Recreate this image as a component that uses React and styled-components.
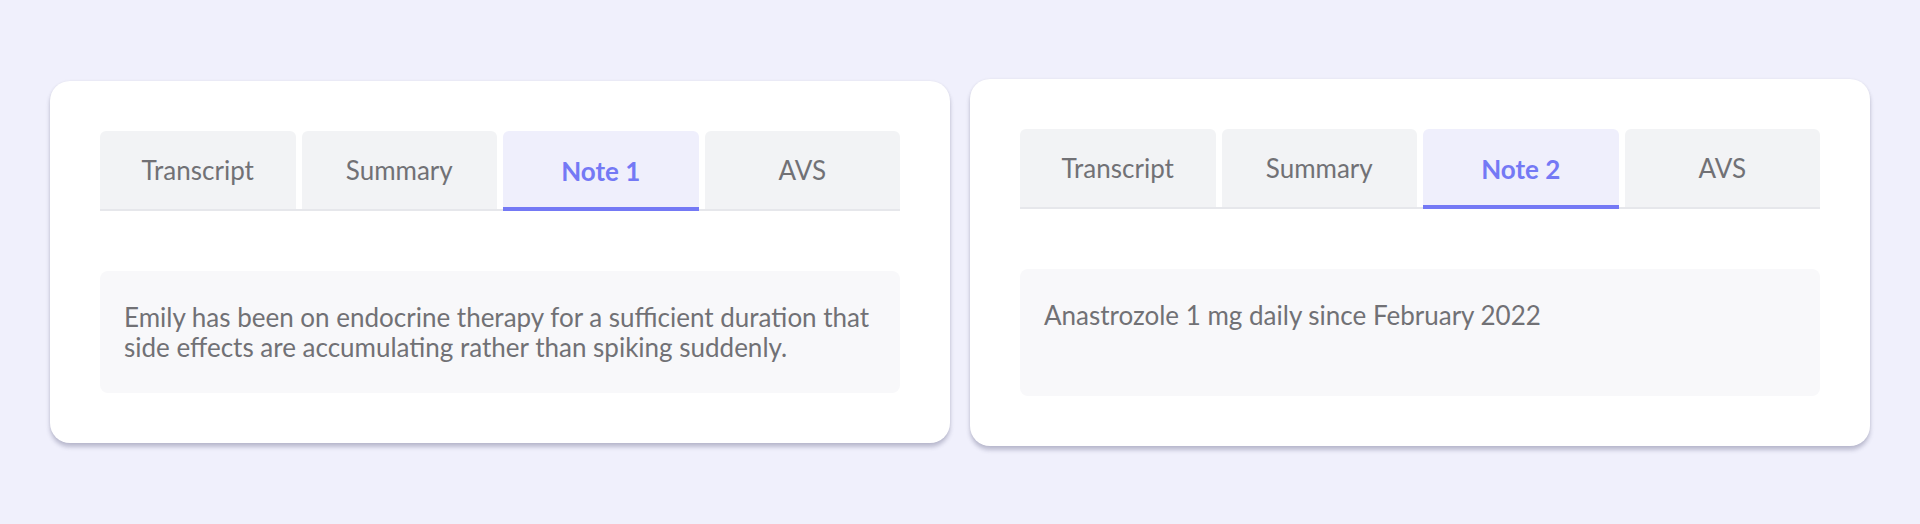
import styled, { createGlobalStyle } from "styled-components";

const GlobalStyle = createGlobalStyle`
  html, body {
    margin: 0;
    padding: 0;
    background-color: #f0f0fc;
  }
  body {
    font-family: Lato, "Noto Sans", sans-serif;
  }
`;

const Page = styled.div`
  min-height: 524px;
  box-sizing: border-box;
  padding: 0 50px;
  display: flex;
  align-items: center;
  gap: 20px;
`;

const Card = styled.div`
  flex: 1;
  background-color: #ffffff;
  border-radius: 20px;
  padding: 50px;
  box-shadow: 0 4px 4px rgba(70, 70, 110, 0.3), 0 0 3px rgba(0, 0, 0, 0.06);
`;

const TabList = styled.div`
  display: flex;
  gap: 6px;
  border-bottom: 2px solid #e6e7eb;
`;

const Tab = styled.button`
  flex: 1;
  border: none;
  border-radius: 6px 6px 0 0;
  padding: 0;
  font-family: Lato, "Noto Sans", sans-serif;
  font-size: 26px;
  font-weight: ${(p) => (p.$active ? 700 : 400)};
  color: ${(p) => (p.$active ? "#7479f5" : "#717175")};
  background-color: ${(p) => (p.$active ? "#efeffc" : "#f2f3f5")};
  box-shadow: ${(p) => (p.$active ? "inset 0 -4px 0 #7479f5" : "none")};
  margin: 0 0 ${(p) => (p.$active ? "-2px" : "0")};
  height: ${(p) => (p.$active ? "80px" : "78px")};
  cursor: pointer;
`;

const Content = styled.div`
  margin-top: 60px;
  background-color: #f8f8fa;
  border-radius: 8px;
  padding: 31px 24px;
  min-height: ${(p) => p.$minHeight || 0}px;
  box-sizing: border-box;
  font-size: 26px;
  line-height: 30px;
  color: #717175;
`;

const tabs = ["Transcript", "Summary", "Note", "AVS"];

function NoteCard({ note, text, minHeight }) {
  return (
    <Card>
      <TabList>
        {tabs.map((t) => (
          <Tab key={t} $active={t === "Note"}>
            {t === "Note" ? `Note ${note}` : t}
          </Tab>
        ))}
      </TabList>
      <Content $minHeight={minHeight}>{text}</Content>
    </Card>
  );
}

export default function App() {
  return (
    <>
      <GlobalStyle />
      <Page>
        <NoteCard
          note={1}
          text="Emily has been on endocrine therapy for a sufficient duration that side effects are accumulating rather than spiking suddenly."
        />
        <NoteCard
          note={2}
          text="Anastrozole 1 mg daily since February 2022"
          minHeight={127}
        />
      </Page>
    </>
  );
}
